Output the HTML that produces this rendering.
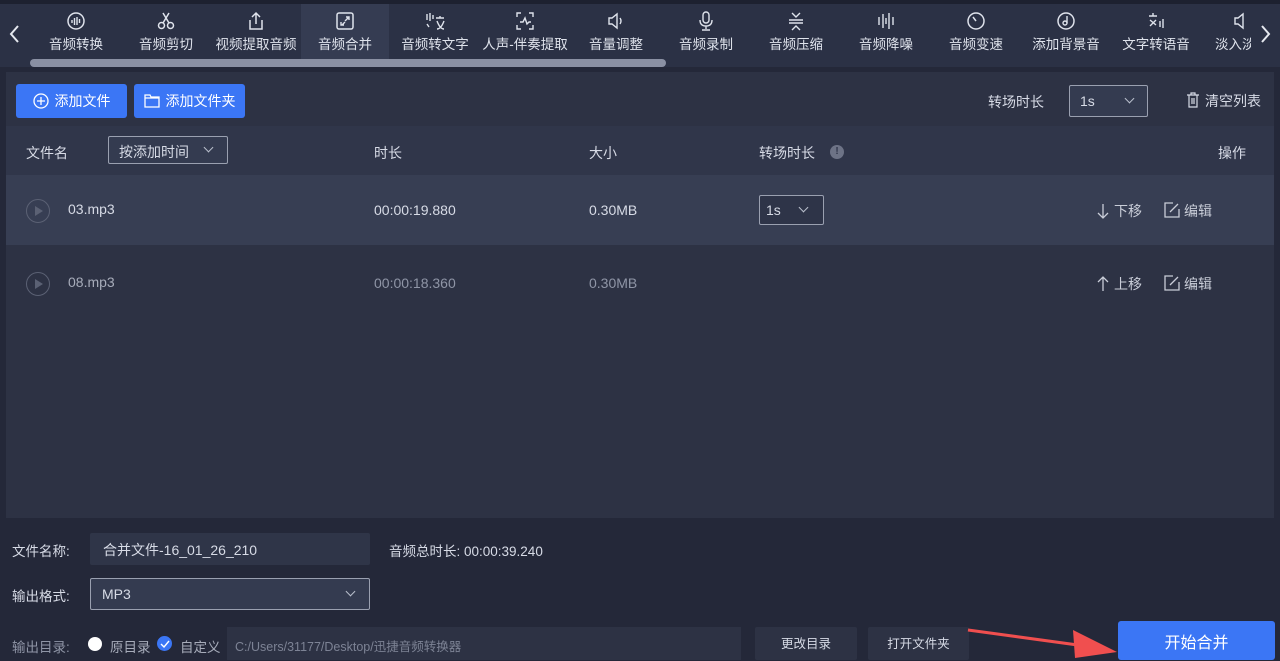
<!DOCTYPE html>
<html><head><meta charset="utf-8"><style>
*{margin:0;padding:0;box-sizing:border-box}
body{width:1280px;height:660px;overflow:hidden;background:#242839;font-family:"Liberation Sans","Noto Sans CJK SC",sans-serif;color:#d7dbe6;position:relative;font-size:14px}
.abs{position:absolute}
.top{left:0;top:0;width:1280px;height:4px;background:#1d2130}
.tb{left:0;top:4px;width:1280px;height:63px;background:#2b3145}
.tab{position:absolute;top:4px;width:90px;height:55px;text-align:center;font-size:13.5px;color:#dfe3ec}
.tab .ic{height:22px;margin-top:6px;display:flex;justify-content:center;align-items:center}
.tab .lb{margin-top:1px;white-space:nowrap}
.act{background:#353c52}
.scroll{left:30px;top:59px;width:636px;height:8px;border-radius:4px;background:#8a90a3}
.panel{left:6px;top:72px;width:1268px;height:446px;background:#2d3244}
.btn{background:#3b76f5;color:#fff;border-radius:3px;font-size:14px;display:flex;align-items:center;justify-content:center;gap:6px}
.hdr{left:6px;top:126px;width:1268px;height:49px;background:#30364a}
.r1{left:6px;top:175px;width:1268px;height:70px;background:#373e53}
.t{position:absolute;white-space:nowrap}
.sel{border:1px solid #9aa0b0;border-radius:2px;background:#343b50}
.play{position:absolute;width:24px;height:24px;border:1.5px solid #5b6174;border-radius:50%}
.play:after{content:"";position:absolute;left:8px;top:6px;border-left:8px solid #5b6174;border-top:5px solid transparent;border-bottom:5px solid transparent}
.chev{position:absolute;width:7px;height:7px;border-right:1px solid #b9bfcc;border-bottom:1px solid #b9bfcc;transform:rotate(45deg)}
</style></head><body>
<div class="abs top"></div>
<div class="abs tb"></div>
<svg class="abs" style="left:8px;top:24px" width="14" height="20"><path d="M10 2L3 10l7 8" stroke="#e5e8ef" stroke-width="2" fill="none"/></svg>
<svg class="abs" style="left:1258px;top:24px" width="14" height="20"><path d="M4 2l7 8-7 8" stroke="#e5e8ef" stroke-width="2" fill="none"/></svg>
<div class="tab" style="left:31px"><div class="ic"><svg width="20" height="20"><circle cx="10" cy="10" r="8" stroke="#dfe3ec" stroke-width="1.5" fill="none"/><path d="M6 9v3M8.5 7v7M11 6v8M13.5 8v4" stroke="#dfe3ec" stroke-width="1.4"/></svg></div><div class="lb">音频转换</div></div>
<div class="tab" style="left:121px"><div class="ic"><svg width="20" height="20"><circle cx="5.5" cy="14.5" r="3" stroke="#dfe3ec" stroke-width="1.5" fill="none"/><circle cx="14.5" cy="14.5" r="3" stroke="#dfe3ec" stroke-width="1.5" fill="none"/><path d="M7 12L13 2M13 12L7 2" stroke="#dfe3ec" stroke-width="1.5"/></svg></div><div class="lb">音频剪切</div></div>
<div class="tab" style="left:211px"><div class="ic"><svg width="20" height="20"><path d="M4 9v9h12V9M10 13V2M6 6l4-4 4 4" stroke="#dfe3ec" stroke-width="1.5" fill="none"/></svg></div><div class="lb">视频提取音频</div></div>
<div class="tab act" style="left:301px;width:88px"><div class="ic"><svg width="20" height="20"><rect x="2" y="2" width="16" height="16" rx="2" stroke="#dfe3ec" stroke-width="1.5" fill="none"/><path d="M14 6l-4 4M7 14l3-3M6 11v3h3M11 6h3v3" stroke="#dfe3ec" stroke-width="1.4" fill="none"/></svg></div><div class="lb">音频合并</div></div>
<div class="tab" style="left:390px"><div class="ic"><svg width="22" height="20"><path d="M3 3v6M6 2v8M9 4v4M3 13l2 3M12 7h8M16 5v2M13 10q3 8 7 8M20 10q-3 8-7 8" stroke="#dfe3ec" stroke-width="1.4" fill="none"/></svg></div><div class="lb">音频转文字</div></div>
<div class="tab" style="left:480px"><div class="ic"><svg width="20" height="20"><path d="M2 6V2h4M14 2h4v4M18 14v4h-4M6 18H2v-4M5 11h3l2-4 2 6 2-2h2" stroke="#dfe3ec" stroke-width="1.4" fill="none"/></svg></div><div class="lb">人声-伴奏提取</div></div>
<div class="tab" style="left:571px"><div class="ic"><svg width="20" height="20"><path d="M3 7h3l5-4v14l-5-4H3z M14 7q2 3 0 6" stroke="#dfe3ec" stroke-width="1.4" fill="none"/></svg></div><div class="lb">音量调整</div></div>
<div class="tab" style="left:661px"><div class="ic"><svg width="20" height="20"><rect x="7" y="1" width="6" height="11" rx="3" stroke="#dfe3ec" stroke-width="1.4" fill="none"/><path d="M4 9q0 6 6 6t6-6M10 15v3M6 19h8" stroke="#dfe3ec" stroke-width="1.4" fill="none"/></svg></div><div class="lb">音频录制</div></div>
<div class="tab" style="left:751px"><div class="ic"><svg width="20" height="20"><path d="M6 2l4 4 4-4M3 9h14M3 12h14M6 19l4-4 4 4" stroke="#dfe3ec" stroke-width="1.4" fill="none"/></svg></div><div class="lb">音频压缩</div></div>
<div class="tab" style="left:841px"><div class="ic"><svg width="20" height="20"><path d="M3 6v8M7 3v14M10 7v6M13 2v16M17 6v8" stroke="#dfe3ec" stroke-width="1.4"/></svg></div><div class="lb">音频降噪</div></div>
<div class="tab" style="left:931px"><div class="ic"><svg width="20" height="20"><circle cx="10" cy="10" r="8" stroke="#dfe3ec" stroke-width="1.5" fill="none"/><path d="M7 6l3 4" stroke="#dfe3ec" stroke-width="1.5"/></svg></div><div class="lb">音频变速</div></div>
<div class="tab" style="left:1021px"><div class="ic"><svg width="20" height="20"><circle cx="10" cy="10" r="8" stroke="#dfe3ec" stroke-width="1.5" fill="none"/><circle cx="9" cy="12" r="2" stroke="#dfe3ec" stroke-width="1.4" fill="none"/><path d="M11 12V5" stroke="#dfe3ec" stroke-width="1.4"/></svg></div><div class="lb">添加背景音</div></div>
<div class="tab" style="left:1111px"><div class="ic"><svg width="20" height="20"><path d="M3 5h8M7 2v3M4 9l6 5M10 9l-6 6M14 10v6M17 8v9" stroke="#dfe3ec" stroke-width="1.4" fill="none"/></svg></div><div class="lb">文字转语音</div></div>
<div class="tab" style="left:1201px;width:50px;overflow:hidden;text-align:left;padding-left:14px"><div class="ic" style="justify-content:flex-start;padding-left:18px"><svg width="14" height="20"><path d="M2 7h3l5-4v14l-5-4H2z" stroke="#dfe3ec" stroke-width="1.4" fill="none"/></svg></div><div class="lb">淡入淡出</div></div>
<div class="abs scroll"></div>

<div class="abs panel"></div>
<div class="abs btn" style="left:16px;top:84px;width:111px;height:34px"><svg width="16" height="16"><circle cx="8" cy="8" r="7" stroke="#fff" stroke-width="1.3" fill="none"/><path d="M8 4v8M4 8h8" stroke="#fff" stroke-width="1.3"/></svg>添加文件</div>
<div class="abs btn" style="left:134px;top:84px;width:111px;height:34px"><svg width="16" height="16"><path d="M1 2h5l1 2h8v10H1z M1 5h14" stroke="#fff" stroke-width="1.3" fill="none"/></svg>添加文件夹</div>
<div class="t" style="left:988px;top:92px">转场时长</div>
<div class="abs sel" style="left:1069px;top:85px;width:79px;height:32px"><span class="t" style="left:10px;top:7px">1s</span><i class="chev" style="left:56px;top:9px"></i></div>
<svg class="abs" style="left:1186px;top:92px" width="14" height="16"><path d="M1 3h12M5 3V1h4v2M3 3v12h8V3M6 6v6M8 6v6" stroke="#d7dbe6" stroke-width="1.2" fill="none"/></svg>
<div class="t" style="left:1205px;top:91px">清空列表</div>

<div class="abs hdr"></div>
<div class="t" style="left:26px;top:143px">文件名</div>
<div class="abs sel" style="left:108px;top:136px;width:120px;height:28px"><span class="t" style="left:10px;top:5px">按添加时间</span><i class="chev" style="left:96px;top:7px"></i></div>
<div class="t" style="left:374px;top:143px">时长</div>
<div class="t" style="left:589px;top:143px">大小</div>
<div class="t" style="left:759px;top:143px">转场时长</div>
<div class="abs" style="left:830px;top:145px;width:14px;height:14px;border-radius:50%;background:#6d7386;color:#2f354a;font-size:10px;font-weight:bold;text-align:center;line-height:14px">!</div>
<div class="t" style="left:1218px;top:143px">操作</div>

<div class="abs r1"></div>
<div class="play" style="left:26px;top:199px"></div>
<div class="t" style="left:68px;top:201px">03.mp3</div>
<div class="t" style="left:374px;top:202px">00:00:19.880</div>
<div class="t" style="left:589px;top:202px">0.30MB</div>
<div class="abs sel" style="left:759px;top:195px;width:65px;height:30px;background:#2e3448"><span class="t" style="left:6px;top:6px">1s</span><i class="chev" style="left:40px;top:8px"></i></div>
<svg class="abs" style="left:1097px;top:203px" width="12" height="16"><path d="M6 1v14M1 10l5 5 5-5" stroke="#c9cdd8" stroke-width="1.3" fill="none"/></svg>
<div class="t" style="left:1114px;top:201px;color:#c9cdd8">下移</div>
<svg class="abs" style="left:1164px;top:202px" width="16" height="16"><path d="M9 1H1v14h14V7M6 10l8-8" stroke="#c9cdd8" stroke-width="1.3" fill="none"/></svg>
<div class="t" style="left:1184px;top:201px;color:#c9cdd8">编辑</div>

<div class="play" style="left:26px;top:272px"></div>
<div class="t" style="left:68px;top:274px;color:#a7acba">08.mp3</div>
<div class="t" style="left:374px;top:275px;color:#8f95a6">00:00:18.360</div>
<div class="t" style="left:589px;top:275px;color:#8f95a6">0.30MB</div>
<svg class="abs" style="left:1097px;top:276px" width="12" height="16"><path d="M6 15V1M1 6l5-5 5 5" stroke="#c9cdd8" stroke-width="1.3" fill="none"/></svg>
<div class="t" style="left:1114px;top:274px;color:#c9cdd8">上移</div>
<svg class="abs" style="left:1164px;top:275px" width="16" height="16"><path d="M9 1H1v14h14V7M6 10l8-8" stroke="#c9cdd8" stroke-width="1.3" fill="none"/></svg>
<div class="t" style="left:1184px;top:274px;color:#c9cdd8">编辑</div>

<div class="t" style="left:12px;top:540px;font-size:13.5px">文件名称:</div>
<div class="abs" style="left:90px;top:533px;width:280px;height:32px;background:#2f3548;border-radius:2px"></div>
<div class="t" style="left:103px;top:540px">合并文件-16_01_26_210</div>
<div class="t" style="left:389px;top:540px;font-size:13.5px">音频总时长: 00:00:39.240</div>
<div class="t" style="left:12px;top:585px;font-size:13.5px">输出格式:</div>
<div class="abs sel" style="left:90px;top:578px;width:280px;height:32px"><span class="t" style="left:11px;top:7px">MP3</span><i class="chev" style="left:256px;top:9px"></i></div>

<div class="t" style="left:12px;top:636px;font-size:13.5px;color:#8f95a6">输出目录:</div>
<div class="abs" style="left:88px;top:637px;width:14px;height:14px;border-radius:50%;background:#fff"></div>
<div class="t" style="left:110px;top:636px;font-size:13.5px;color:#a7acba">原目录</div>
<div class="abs" style="left:157px;top:636px;width:15px;height:15px;border-radius:50%;background:#3b76f5"></div>
<svg class="abs" style="left:160px;top:640px" width="10" height="8"><path d="M1 4l3 3 5-6" stroke="#fff" stroke-width="1.4" fill="none"/></svg>
<div class="t" style="left:180px;top:636px;font-size:13.5px;color:#a7acba">自定义</div>
<div class="abs" style="left:227px;top:627px;width:514px;height:33px;background:#2d3244"></div>
<div class="t" style="left:235px;top:636px;font-size:12.5px;color:#7d8395">C:/Users/31177/Desktop/迅捷音频转换器</div>
<div class="abs" style="left:755px;top:627px;width:102px;height:33px;background:#2d3244;border-radius:2px;text-align:center;line-height:34px;font-size:12.5px">更改目录</div>
<div class="abs" style="left:868px;top:627px;width:101px;height:33px;background:#2d3244;border-radius:2px;text-align:center;line-height:34px;font-size:12.5px">打开文件夹</div>
<div class="abs btn" style="left:1118px;top:621px;width:157px;height:39px;font-size:16px">开始合并</div>
<svg class="abs" style="left:965px;top:620px" width="160" height="40"><path d="M3 10L120 26" stroke="#f04f4f" stroke-width="3"/><path d="M108 10L152 32 110 38z" fill="#f04f4f"/></svg>
</body></html>
